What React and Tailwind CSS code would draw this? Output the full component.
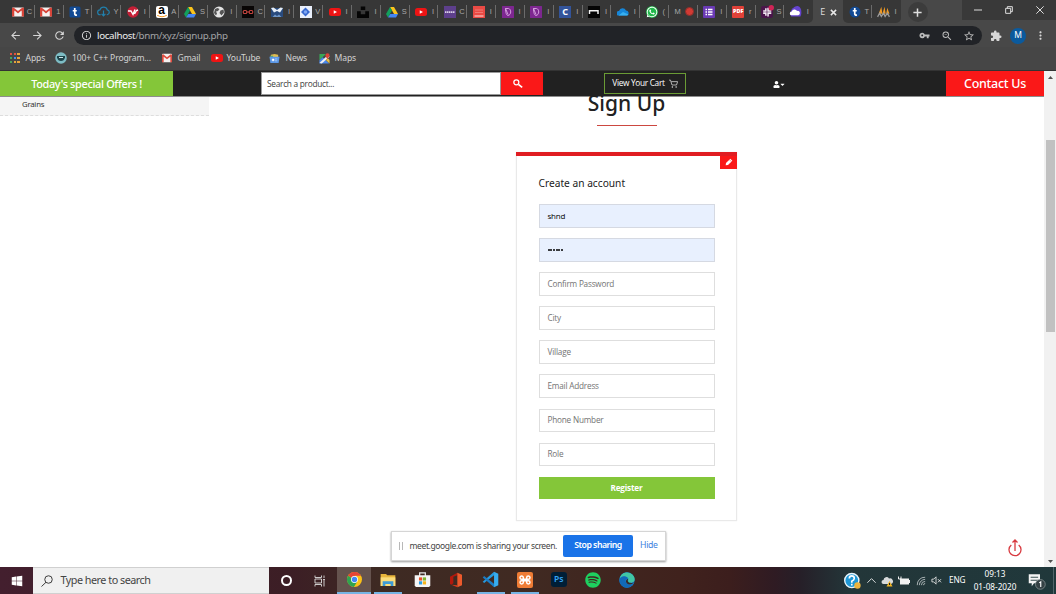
import React from "react";
import {
  MdArrowBack, MdArrowForward, MdRefresh, MdInfoOutline, MdVpnKey, MdZoomOut,
  MdStarBorder, MdExtension, MdMoreVert,
} from "react-icons/md";
import { FaWhatsapp, FaUser, FaSpotify, FaCaretDown, FaWindows } from "react-icons/fa";

const Svg = ({ s = 12, vb = "0 0 24 24", children, className = "" }) => (
  <svg width={s} height={s} viewBox={vb} fill="none" className={"block shrink-0 " + className}>{children}</svg>
);

const Gmail = () => (
  <Svg s={12}>
    <rect x="0" y="3" width="24" height="18" rx="2" fill="#f4f0ef" />
    <path d="M0 4v17h5V9l7 6 7-6v12h5V4l-3-1-9 7-9-7z" fill="#d8453a" />
    <path d="M5 20V10l7 6 7-6v10z" fill="#f6f1f0" />
  </Svg>
);
const Tumblr = ({ round }) => (
  <Svg s={12}>
    <rect x="1" y="1" width="22" height="22" rx={round ? 11 : 3} fill="#124a94" />
    <path d="M11.500 4v12q0 2.500 4.500 2M7.500 9.500h8" stroke="#fff" strokeWidth="3.400" />
  </Svg>
);
const CloudDown = () => (
  <Svg s={13}>
    <path d="M7 18H6a4.500 4.500 0 0 1-.5-9A7 7 0 0 1 19 9a4.600 4.600 0 0 1 0 9h-1M12 10v10m-3.500-3.500L12 20l3.500-3.500" stroke="#2180ad" strokeWidth="2.200" />
  </Svg>
);
const RedV = () => (
  <Svg>
    <circle cx="12" cy="12" r="11.500" fill="#c51f36" />
    <path d="M2 10h6l4 7 4-10M15 16l4-7 3-1" stroke="#fff" strokeWidth="2.800" />
  </Svg>
);
const Amazon = () => (
  <span className="flex h-[12px] w-[12px] shrink-0 flex-col items-center rounded-[2px] bg-white">
    <span className="h-[9px] font-['Liberation_Sans',sans-serif] text-[12px] font-bold leading-[8px] text-black">a</span>
    <svg width="10" height="3" viewBox="0 0 10 3"><path d="M0 0q5 3.500 10 0" stroke="#f59b23" fill="none" /></svg>
  </span>
);
const Drive = () => (
  <Svg s={12}>
    <path d="M8 2h8l8 14h-8z" fill="#fbc41b" />
    <path d="M8 2l4 7-8 14-4-7z" fill="#12a05c" />
    <path d="M8.500 16H24l-4 7H4z" fill="#4385f4" />
  </Svg>
);
const Globe = () => (
  <Svg s={12}>
    <circle cx="12" cy="12" r="11" fill="#e4e4e4" />
    <path d="M4 6l5-2 4 2-3 4-4 1 2 4-2 4-4-5zM15 9l6-2 1 6-5 6-4-5z" fill="#555" />
  </Svg>
);
const Glasses = () => (
  <Svg s={12}>
    <rect width="24" height="24" fill="#080505" />
    <rect x="2.500" y="9" width="7" height="6" rx="2" stroke="#c4453f" strokeWidth="2.200" />
    <rect x="14.500" y="9" width="7" height="6" rx="2" stroke="#c4453f" strokeWidth="2.200" />
    <path d="M10 12h4" stroke="#c4453f" strokeWidth="2" />
  </Svg>
);
const BlueM = () => (
  <Svg s={12}>
    <rect y="4" width="24" height="18" fill="#284a7d" />
    <path d="M0 4l5-1 7 5 7-5 5 1-6 9-6-3-6 3z" fill="#e6eef7" />
    <path d="M3 22l5-5 4 3 4-3 5 5z" fill="#6f97c8" />
  </Svg>
);
const BlueDiamond = () => (
  <Svg s={12}>
    <rect width="24" height="24" fill="#e9effb" />
    <path d="M11 3l9 9-9 9-9-9z" fill="#3768cf" />
    <circle cx="11" cy="12" r="3.500" fill="#7ea6f2" />
  </Svg>
);
const YouTube = () => (
  <Svg s={12}>
    <rect x="0" y="4" width="24" height="16" rx="5" fill="#ee1414" />
    <path d="M9.500 8.500v7l6.500-3.500z" fill="#fff" />
  </Svg>
);
const Unsplash = () => (
  <Svg s={12}><path d="M7.500 1h9v7h-9zM0 10.500h7.500v6h9v-6H24V24H0z" fill="#050505" /></Svg>
);
const PurpleTag = () => (
  <Svg s={12}>
    <rect width="24" height="24" fill="#5d3f8c" />
    <path d="M2 12h20" stroke="#d9cfe8" strokeWidth="3.500" strokeDasharray="3 1" />
  </Svg>
);
const RedBox = () => (
  <Svg s={12}>
    <rect width="24" height="24" fill="#ea4a44" />
    <path d="M4 8h16M4 13h16" stroke="#ef7a74" strokeWidth="2" />
    <path d="M3 20h18" stroke="#fbe1df" strokeWidth="2" />
  </Svg>
);
const Violet = () => (
  <Svg s={12}>
    <rect width="24" height="24" rx="1" fill="#7d2790" />
    <path d="M7 5h6c6 1 6 13-1 14-3 0-5-6-5-14zM7 5l5 12" stroke="#dba9e4" strokeWidth="1.800" />
  </Svg>
);
const LetterC = () => (
  <span className="flex h-[12px] w-[12px] shrink-0 items-center justify-center bg-[#33549a] text-[9px] font-bold leading-none text-white">C</span>
);
const BlackN = () => (
  <Svg s={12}>
    <rect width="24" height="24" fill="#050505" />
    <path d="M3 16V9.500h17V16" stroke="#f2f2f2" strokeWidth="3" />
  </Svg>
);
const OneDrive = () => (
  <Svg s={12}>
    <path d="M3 19a4.500 4.500 0 0 1 1-9 7.500 7.500 0 0 1 14-1 5.200 5.200 0 0 1 2 10z" fill="#1686d9" />
    <path d="M3 19l9-7 11 5q-1 2-3 2z" fill="#37b0f0" />
  </Svg>
);
const WhatsApp = () => (
  <span className="flex h-[12px] w-[12px] shrink-0 items-center justify-center rounded-full bg-[#21b84b] text-white"><FaWhatsapp size={12} /></span>
);
const Forms = () => (
  <Svg s={12}>
    <rect width="24" height="24" rx="2" fill="#6a3ab4" />
    <path d="M5 7h3M5 12h3M5 17h3M10 7h9M10 12h9M10 17h9" stroke="#fff" strokeWidth="2.600" />
  </Svg>
);
const Pdf = () => (
  <span className="flex h-[12px] w-[12px] shrink-0 items-center justify-center rounded-[1px] bg-[#e04138] text-[5.500px] font-black leading-none text-white">PDF</span>
);
const Slack = () => (
  <Svg s={13}>
    <rect y="2" width="22" height="22" rx="4" fill="#4a154b" />
    <path d="M9 6v5H4M13 5v6h6M9 20v-5H4M13 21v-6h6" stroke="#f4eaf4" strokeWidth="2.800" />
    <circle cx="19" cy="5" r="5" fill="#cf2557" />
  </Svg>
);
const PurpleCloud = () => (
  <Svg s={13}>
    <path d="M4 21C-1 14 6 3 16 2c8 2 8 14 5 19z" fill="#6543d0" />
    <path d="M5 19a3.500 3.500 0 0 1 0-7 5.500 5.500 0 0 1 10-1 4 4 0 0 1 2 8z" fill="#fff" />
  </Svg>
);
const PhpMyAdmin = () => (
  <Svg s={13}>
    <path d="M3 16L8 3l2 13zM10 16l4-13 2 13zM17 16l2-11 4 11z" fill="#f09a24" />
    <path d="M1 22l4-7 3 6 4-6 3 6 4-6 4 7" stroke="#9b9b9b" strokeWidth="2.400" />
  </Svg>
);

const tabs = [
  [Gmail, "C"], [Gmail, "1"], [Tumblr, "T"], [CloudDown, "Y"], [RedV, "I"], [Amazon, "A"],
  [Drive, "S"], [Globe, "I"], [Glasses, "C"], [BlueM, "I"], [BlueDiamond, "V"], [YouTube, "I"],
  [Unsplash, "I"], [Drive, "S"], [YouTube, "I"], [PurpleTag, "C"], [RedBox, "I"], [Violet, "I"],
  [Violet, "I"], [LetterC, "I"], [BlackN, "I"], [OneDrive, "I"], [WhatsApp, "("], [null, "M"],
  [Forms, "I"], [Pdf, "r"], [Slack, "S"], [PurpleCloud, "I"],
];

function Tab({ Icon, letter, last }) {
  return (
    <div className="flex h-[23px] w-[28.830px] shrink-0 items-center">
      {Icon ? (
        <>
          <span className="ml-[5px] flex w-[13px] justify-center"><Icon /></span>
          <span className="ml-[2.500px] flex w-[6px] justify-center font-['Liberation_Sans',sans-serif] text-[7.500px] text-[#a9a9a9]">{letter}</span>
        </>
      ) : (
        <>
          <span className="ml-[5px] flex w-[7px] justify-center font-['Liberation_Sans',sans-serif] text-[7.500px] text-[#a9a9a9]">{letter}</span>
          <span className="ml-[4px] h-[9px] w-[9px] rounded-full border border-[#8c2f2b] bg-[#d23a33]" />
        </>
      )}
      {!last && <span className="ml-auto h-[13px] w-px bg-[#6b6b6b]" />}
    </div>
  );
}

function TabStrip() {
  return (
    <div className="flex h-[24px] shrink-0 items-start bg-[#484848]">
      <div className="flex rounded-br-[5px] bg-[#373737] pl-[6px]">
        {tabs.map(([Icon, letter], i) => <Tab key={i} Icon={Icon} letter={letter} last={i === tabs.length - 1} />)}
      </div>
      <div className="flex h-[24px] w-[30px] items-center gap-[5px] pl-[7px] text-[9px] text-[#dcdcdc]">
        <span>E</span>
        <Svg s={7}><path d="M3 3l18 18M21 3L3 21" stroke="#e8e8e8" strokeWidth="5" /></Svg>
      </div>
      <div className="flex rounded-b-[5px] bg-[#373737]">
        <Tab Icon={() => <Tumblr round />} letter="T" />
        <Tab Icon={PhpMyAdmin} letter="I" last />
      </div>
      <div className="ml-[7px] mt-[2px] flex h-[20px] w-[20px] items-center justify-center rounded-full bg-[#3c3c3c]">
        <Svg s={9}><path d="M12 1v22M1 12h22" stroke="#dedede" strokeWidth="4" /></Svg>
      </div>
      <div className="ml-auto flex h-[20px] w-[94px] items-center justify-between bg-[#393939] pl-[12px] pr-[12px]">
        <Svg s={8}><path d="M0 12h24" stroke="#ddd" strokeWidth="3" /></Svg>
        <Svg s={8}><path d="M2 7h15v15H2zM7 7V2h15v15h-5" stroke="#ddd" strokeWidth="3" /></Svg>
        <Svg s={8}><path d="M1 1l22 22M23 1L1 23" stroke="#ddd" strokeWidth="3" /></Svg>
      </div>
    </div>
  );
}

function Toolbar() {
  return (
    <div className="flex h-[23px] shrink-0 items-center bg-[#484848] text-[#d6d6d6]">
      <MdArrowBack size={13} className="ml-[8.500px]" />
      <MdArrowForward size={13} className="ml-[9px]" />
      <MdRefresh size={13} className="ml-[9px]" />
      <div className="ml-[8.500px] flex h-[19px] w-[908px] items-center rounded-full bg-[#212327] pl-[7px] pr-[7px]">
        <MdInfoOutline size={11} />
        <span className="ml-[5px] pt-[1px] text-[9.800px] tracking-[-0.350px] text-[#a1a3a6]"><span className="text-[#ededed]">localhost</span>/bnm/xyz/signup.php</span>
        <div className="ml-auto flex items-center gap-[10.500px] text-[#bcbcbc]">
          <MdVpnKey size={11} />
          <MdZoomOut size={12} />
          <MdStarBorder size={12} />
        </div>
      </div>
      <MdExtension size={12} className="ml-[8px]" />
      <span className="ml-[8px] flex h-[16px] w-[16px] items-center justify-center rounded-full bg-[#0b5a9d] text-[8.500px] text-white">M</span>
      <MdMoreVert size={13} className="ml-[8px]" />
    </div>
  );
}

const appDots = ["#e5503f", "#e5503f", "#e8a33a", "#4ca65a", "#4b8df0", "#e8a33a", "#4ca65a", "#e8a33a", "#e8a33a"];

function Bookmarks() {
  const label = "text-[8.600px] tracking-[-0.150px] text-[#d2d2d2]";
  return (
    <div className="flex h-[24px] shrink-0 items-center border-b border-[#333] bg-[#464646] pb-[1px]">
      <div className="ml-[10px] grid grid-cols-3 gap-[1.500px]">
        {appDots.map((c, i) => <span key={i} className="h-[2.200px] w-[2.200px]" style={{ background: c }} />)}
      </div>
      <span className={label + " ml-[6px] w-[19px] whitespace-nowrap"}>Apps</span>
      <Svg s={12} className="ml-[10.500px]">
        <circle cx="12" cy="12" r="11.500" fill="#7dbcc4" />
        <path d="M4 8h16v3q-2 7-8 7t-8-7z" fill="#20444a" /><path d="M8 11h8" stroke="#cfe7ea" strokeWidth="2" />
      </Svg>
      <span className={label + " ml-[5px] w-[78px] whitespace-nowrap"}>100+ C++ Program...</span>
      <span className="ml-[12px]"><Svg s={10}><rect y="2" width="24" height="20" rx="2" fill="#f4f0ef" /><path d="M0 4v18h4V9l8 6 8-6v13h4V4l-3-1-9 7-9-7z" fill="#dd4b3e" /></Svg></span>
      <span className={label + " ml-[5.500px] w-[22px] whitespace-nowrap"}>Gmail</span>
      <span className="ml-[11px]"><YouTube /></span>
      <span className={label + " ml-[4px] w-[32px] whitespace-nowrap"}>YouTube</span>
      <Svg s={11} className="ml-[10.500px]">
        <path d="M4 9V4l8-2 8 2v5z" fill="#e0bc4d" /><path d="M3 6h6v4H3z" fill="#4fa86a" />
        <path d="M1 8h22l-2 14H3z" fill="#5b97e6" /><path d="M7 13h4v4H7zM13 13h5M13 17h5" fill="#fff" stroke="#fff" />
      </Svg>
      <span className={label + " ml-[5.500px] w-[21px] whitespace-nowrap"}>News</span>
      <Svg s={11} className="ml-[12px]">
        <path d="M1 2h14L1 16z" fill="#39a757" /><path d="M1 16l7-7 14 14H1z" fill="#4a88ec" />
        <path d="M1 22L20 4l3 4L6 23z" fill="#f1f1f1" /><path d="M15 15l4-4 4 4v8z" fill="#e8c14a" />
        <path d="M18 14c-1-4-4-5-4-9a4.500 4.500 0 0 1 9 0c0 4-4 5-5 9z" fill="#dc4437" />
      </Svg>
      <span className={label + " ml-[5px]"}>Maps</span>
    </div>
  );
}

function SiteHeader() {
  return (
    <header className="flex h-[26px] shrink-0 items-stretch border-b border-[#8d8d8d] bg-[#212121] font-['Noto_Sans',sans-serif]">
      <div className="flex w-[173px] items-center justify-center bg-[#84c639] pt-[1px] text-[10.900px] font-medium tracking-[-0.320px] text-white">Today's special Offers !</div>
      <div className="ml-[88px] mt-[1px] flex h-[23px] w-[240px] items-center border border-[#999] bg-white pl-[5px] pt-[1px] font-['Open_Sans',sans-serif] text-[8.300px] tracking-[-0.270px] text-[#3c3c3c]">Search a product...</div>
      <div className="mt-[1px] flex h-[23px] w-[42px] items-center bg-[#fa1818] pl-[12px]">
        <Svg s={10}><circle cx="8" cy="8" r="6" stroke="#fff" strokeWidth="3" /><path d="M13 13l9 7" stroke="#fff" strokeWidth="4" /></Svg>
      </div>
      <div className="ml-[61px] mt-[2px] flex h-[21px] w-[82px] items-center justify-center gap-[4px] whitespace-nowrap border border-[#6a9b35] font-['Open_Sans',sans-serif] text-[8.300px] font-medium tracking-[-0.320px] text-white">
        <span>View Your Cart</span>
        <Svg s={9}><path d="M0 3h4l4 13h12l3-9H6" stroke="#ddd" strokeWidth="2" /><circle cx="9" cy="21" r="2" fill="#ddd" /><circle cx="19" cy="21" r="2" fill="#ddd" /></Svg>
      </div>
      <div className="ml-[87px] flex items-center pt-[1px] text-white">
        <FaUser size={7} /><FaCaretDown size={7} className="-ml-px" />
      </div>
      <div className="ml-auto flex w-[98px] items-center justify-center bg-[#fa1818] pt-[1px] text-[12.500px] font-medium tracking-[-0.300px] text-white">Contact Us</div>
    </header>
  );
}

const fields = ["Confirm Password", "City", "Village", "Email Address", "Phone Number", "Role"];

function SignUpForm() {
  return (
    <section className="flex w-[835px] flex-col items-center font-['Noto_Sans',sans-serif]">
      <h1 className="h-[13px] text-[21px] font-medium leading-[13px] text-[#212121]">Sign Up</h1>
      <div className="mt-[15px] h-px w-[60px] bg-[#cc4740]" />
      <div className="mt-[26px] flex h-[369px] w-[221px] shrink-0 flex-col border-x border-b border-[#e9e9e9] shadow-[0_0_1px_#e4e4e4]">
        <div className="-mx-px h-[4px] shrink-0 bg-[#e01d22]" />
        <div className="-mr-px flex h-[13px] w-[17px] shrink-0 items-center justify-center self-end bg-[#fa1818] pb-[2px]">
          <Svg s={8}><path d="M2 22l1-7L16 2l6 6L9 21z" fill="#fff" /><path d="M13 5l6 6" stroke="#fa1818" strokeWidth="1.500" /></Svg>
        </div>
        <div className="flex flex-col px-[21.500px]">
          <h2 className="mt-[7px] h-[28px] text-[10.200px] leading-[15px] text-[#212121]">Create an account</h2>
          <div className="flex flex-col gap-[10.600px] font-['Open_Sans',sans-serif] text-[8.200px] tracking-[-0.200px] text-[#737373]">
            <div className="flex h-[23.500px] items-center border border-[#d5d9e2] bg-[#e8f0fe] pl-[8px] text-[8px] text-black">shnd</div>
            <div className="flex h-[23.500px] items-center gap-[0.700px] border border-[#d5d9e2] bg-[#e8f0fe] pl-[8px]">
              {[0, 1, 2, 3, 4, 5].map((i) => <span key={i} className="h-[2px] w-[2px] rounded-full bg-black" />)}
            </div>
            {fields.map((f) => <div key={f} className="flex h-[23.500px] items-center border border-[#dedede] pl-[8px]">{f}</div>)}
            <button className="h-[22px] bg-[#84c639] text-[8.200px] font-bold text-white">Register</button>
          </div>
        </div>
      </div>
    </section>
  );
}

function SharingBar() {
  return (
    <div className="absolute left-[391px] top-[531px] flex h-[30px] w-[275px] items-center whitespace-nowrap border border-[#d5d5d5] bg-white text-[8.700px] shadow-[0_1px_2px_#999]">
      <span className="ml-[7px] h-[8px] w-[4px] border-x border-[#b8b8b8]" />
      <span className="ml-[6.500px] w-[147px] text-[8.500px] tracking-[-0.380px] text-[#444]">meet.google.com is sharing your screen.</span>
      <span className="ml-[6.500px] flex h-[22px] w-[70px] shrink-0 items-center justify-center rounded-[2px] bg-[#1a73e8] font-semibold tracking-[-0.500px] text-white">Stop sharing</span>
      <span className="ml-[7px] tracking-[-0.300px] text-[#3c7fe0]">Hide</span>
    </div>
  );
}

const Chrome = () => (
  <Svg s={15}>
    <circle cx="12" cy="12" r="12" fill="#fbc116" />
    <path d="M12 12L1.600 6A12 12 0 0 1 22.400 6H12z" fill="#e54435" />
    <path d="M1.600 6A12 12 0 0 0 11 24l5-8-4-4z" fill="#2fa350" />
    <circle cx="12" cy="12" r="5.500" fill="#fff" /><circle cx="12" cy="12" r="4.300" fill="#4286f4" />
  </Svg>
);
const Explorer = () => (
  <Svg s={16}>
    <path d="M1 3h8l2 2h12v16H1z" fill="#e9b53b" /><path d="M1 8h22v13H1z" fill="#fbdc7b" />
    <path d="M4 21v-7h16v7h-4v-3H8v3z" fill="#3e9bd6" />
  </Svg>
);
const Store = () => (
  <Svg s={17}>
    <path d="M8 7V2.500h8V7" stroke="#e8e8e8" strokeWidth="1.800" /><path d="M1 6h22v14l-1.500 2.500h-19L1 20z" fill="#f5f5f5" />
    <path d="M7 9h4.500v4.500H7z" fill="#e8502b" /><path d="M12.500 9H17v4.500h-4.500z" fill="#7db72f" />
    <path d="M7 14.500h4.500V19H7z" fill="#2b9fe6" /><path d="M12.500 14.500H17V19h-4.500z" fill="#f7b51d" />
  </Svg>
);
const Office = () => (
  <Svg s={16}>
    <path d="M3 7l11-6v4L8 7v10l-3 2-2-1z" fill="#b3180c" /><path d="M14 1l7 3v16l-7 3z" fill="#ee5a2c" />
    <path d="M5 19l9 1v3z" fill="#d83b1b" />
  </Svg>
);
const VsCode = () => (
  <Svg s={17}>
    <path d="M17 6L3 17l-2-2L17 1z" fill="#269be0" /><path d="M17 18L3 7 1 9l16 14z" fill="#1b7cc4" />
    <path d="M17 1l6 3v16l-6 3z" fill="#37adf0" />
  </Svg>
);
const Xampp = () => (
  <Svg s={16}>
    <rect width="24" height="24" rx="3" fill="#ee7c35" />
    <path d="M9.500 10V8.500a2.500 2.500 0 1 0-2.500 2.500h10a2.500 2.500 0 1 0-2.500-2.500V15.500a2.500 2.500 0 1 0 2.500-2.500H7a2.500 2.500 0 1 0 2.500 2.500z" stroke="#fff" strokeWidth="2.200" />
  </Svg>
);
const Ps = () => (
  <span className="flex h-[15px] w-[16px] items-center justify-center rounded-[3px] bg-[#001e36] text-[8.500px] font-semibold leading-none text-[#36a5f5]">Ps</span>
);
const Spotify = () => <FaSpotify size={16} color="#1ed05f" />;
const Edge = () => (
  <Svg s={16}>
    <circle cx="12" cy="12" r="11.500" fill="#1687d4" />
    <path d="M1 10C3 0 15-2 21 5c5 6 2 12-5 11-4-1-2-2-2-5 0-4-9-7-13-1z" fill="#41c6a4" />
    <path d="M1 10c3-5 11-5 13 0-5-1-6 6 0 9 3 1 6 0 8-2-4 8-14 8-18 3C1 17 0 14 1 10z" fill="#1269b8" />
    <path d="M14 10c-2 3 0 6 3 6 3 1 5 0 6-2-1 4-6 6-10 4-4-3-3-7 1-8z" fill="#372a2c" />
  </Svg>
);

const apps = [
  { Icon: Chrome, open: true, active: true }, { Icon: Explorer, open: true }, { Icon: Store }, { Icon: Office },
  { Icon: VsCode, open: true }, { Icon: Xampp, open: true }, { Icon: Ps }, { Icon: Spotify }, { Icon: Edge },
];

function Taskbar() {
  return (
    <footer className="flex h-[27px] shrink-0 items-center overflow-hidden bg-[linear-gradient(90deg,#431f2e_0px,#3c1e25_290px,#3e2a23_380px,#402a22_520px,#40221d_680px,#3c1e1d_730px,#2f1b23_775px,#261f28_800px,#233639_850px,#20383b_1056px)] text-white">
      <div className="flex w-[33px] justify-center"><FaWindows size={12} /></div>
      <div className="flex h-[27px] w-[236px] items-center border-y border-[#d0d0d0] bg-[#f0f0f0] pl-[8px]">
        <Svg s={12}><circle cx="15" cy="9" r="7.500" stroke="#333" strokeWidth="1.900" /><path d="M10 14.500L1 23" stroke="#333" strokeWidth="1.900" /></Svg>
        <span className="ml-[7.500px] text-[10.800px] tracking-[-0.500px] text-[#444]">Type here to search</span>
      </div>
      <div className="flex w-[34px] justify-center"><span className="h-[11px] w-[11px] rounded-full border-2 border-white" /></div>
      <div className="flex w-[34px] justify-center">
        <Svg s={12}><path d="M2 1v4h13V1M2 8h13v8H2zM2 23v-4h13v4M20 1v5M20 12v11" stroke="#ddd" strokeWidth="1.800" /><path d="M18.500 8h3v3h-3z" fill="#fff" /></Svg>
      </div>
      {apps.map(({ Icon, open, active }, i) => (
        <div key={i} className={"flex h-[27px] w-[34.130px] flex-col items-center " + (active ? "bg-[#65534e]" : "")}>
          <div className="flex h-[25px] items-center"><Icon /></div>
          {open && <div className={"h-[2px] bg-[#76b4e4] " + (active ? "w-full" : "w-[28px]")} />}
        </div>
      ))}
      <div className="ml-auto flex h-[27px] items-center">
        <Svg s={17}>
          <circle cx="11" cy="12" r="10" fill="#1f97d5" stroke="#e7f4fb" strokeWidth="2" />
          <path d="M7.500 9q0-3.500 3.500-3.500T14.500 9q0 2-3.500 4v2M11 16.500V19" stroke="#fff" strokeWidth="2.300" /><circle cx="19" cy="19" r="4.500" fill="#edb43f" />
        </Svg>
        <Svg s={9} className="ml-[6px]"><path d="M1 18L12 7l11 11" stroke="#fff" strokeWidth="2.200" /></Svg>
        <Svg s={12} className="ml-[5.500px]">
          <path d="M5 18a4 4 0 0 1 0-8 6 6 0 0 1 11-3 5 5 0 0 1 4 11z" fill="#d8dadb" /><path d="M17 12l6 11H11z" fill="#f0b323" /><path d="M17 16v4" stroke="#222" strokeWidth="2" />
        </Svg>
        <Svg s={12} className="ml-[5px]"><path d="M4 7h18v12H4zM22 10h2v6h-2z" fill="#f2f2f2" /><path d="M1 3v5h5V3" stroke="#f2f2f2" strokeWidth="2" /></Svg>
        <Svg s={10} className="ml-[6px]">
          <path d="M3 22A18 18 0 0 1 22 3M8 22A14 14 0 0 1 22 8M13 22a9 9 0 0 1 9-9M18 22a4 4 0 0 1 4-4" stroke="#bfc7c8" strokeWidth="2" />
        </Svg>
        <Svg s={11} className="ml-[5px]"><path d="M2 9h4l5-5v16l-5-5H2zM15 9l7 7M22 9l-7 7" stroke="#eee" strokeWidth="1.800" /></Svg>
        <span className="ml-[7px] w-[17px] text-[8.200px] tracking-[-0.100px]">ENG</span>
        <div className="ml-[8px] flex w-[42px] flex-col items-center whitespace-nowrap text-[8.200px] leading-[12.500px]">
          <span>09:13</span><span>01-08-2020</span>
        </div>
        <Svg s={18} className="ml-[12px]">
          <path d="M1 3h15v12H8l-3 4v-4H1z" fill="#f4f4f4" /><path d="M3.500 7h10M3.500 11h10" stroke="#344b4d" strokeWidth="1.300" />
          <circle cx="16.500" cy="16.500" r="6.500" fill="#344144" stroke="#8b9697" /><path d="M15 14.500l2-1.500v7" stroke="#fff" strokeWidth="1.500" />
        </Svg>
        <div className="ml-[7px] mr-[2px] h-[27px] w-px bg-[#52666a]" />
      </div>
    </footer>
  );
}

export default function App() {
  return (
    <div className="relative flex h-[594px] w-[1056px] flex-col overflow-hidden bg-white font-['Noto_Sans',sans-serif]">
      <TabStrip />
      <Toolbar />
      <Bookmarks />
      <div className="flex h-[496px] shrink-0">
        <div className="flex w-[1044px] flex-col overflow-hidden">
          <SiteHeader />
          <main className="flex min-h-0 flex-1">
            <aside className="w-[209px]">
              <div className="h-[18.500px] border-b border-dashed border-[#ddd] bg-[#f5f5f5] pl-[22px] text-[7.800px] leading-[15px] tracking-[-0.250px] text-[#333]">Grains</div>
            </aside>
            <SignUpForm />
          </main>
        </div>
        <div className="flex w-[12px] flex-col items-center bg-[#f1f1f1]">
          <Svg s={5} className="mt-[4px]"><path d="M0 19h24L12 5z" fill="#505050" /></Svg>
          <div className="mt-[60px] h-[192px] w-[9px] bg-[#c1c1c1]" />
          <Svg s={5} className="mb-[3px] mt-auto"><path d="M0 5h24L12 19z" fill="#505050" /></Svg>
        </div>
      </div>
      <SharingBar />
      <div className="absolute left-[1006px] top-[539px]">
        <Svg s={18} vb="0 0 16 18"><path d="M4.300 6a6 6 0 1 0 7.400 0M8 12V1M5.500 3.500L8 1l2.500 2.500" stroke="#d83a40" strokeWidth="1.300" /></Svg>
      </div>
      <Taskbar />
    </div>
  );
}
